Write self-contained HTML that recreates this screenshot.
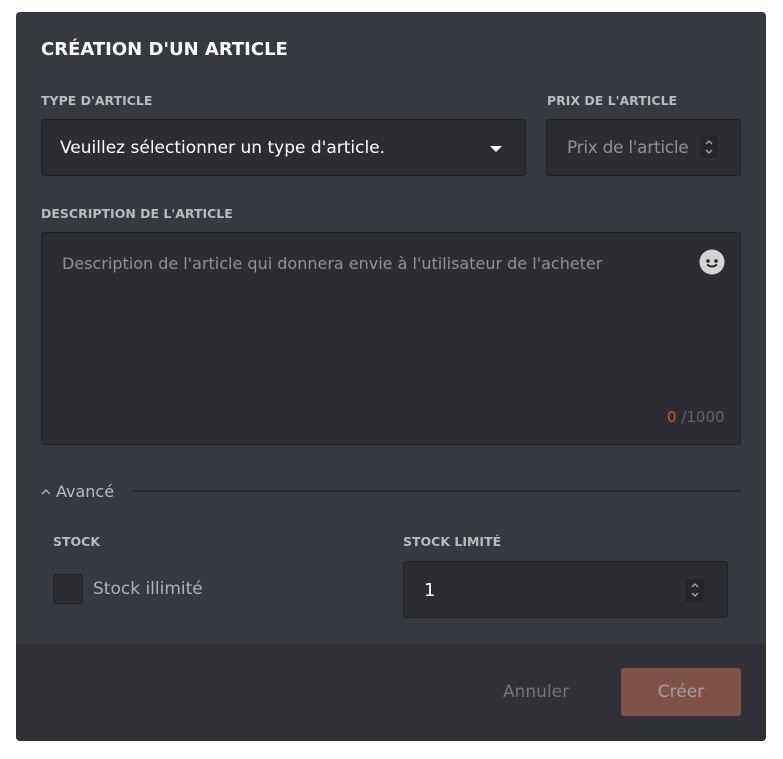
<!DOCTYPE html>
<html><head><meta charset="utf-8"><style>
*{margin:0;padding:0;box-sizing:border-box}
body{width:783px;height:759px;background:#fff;position:relative;font-family:"DejaVu Sans","Liberation Sans",sans-serif;overflow:hidden}
.m{position:absolute;left:16px;top:12px;width:750px;height:729px;background:#36393f;border-radius:4px;overflow:hidden}
.a{position:absolute;white-space:nowrap}
.lbl{position:absolute;color:#b9bbbe;font-size:12.5px;font-weight:bold;letter-spacing:0}
.in{position:absolute;background:#2b2d32;border:1px solid #212225;border-radius:3px}
.foot{position:absolute;left:0;top:632px;width:750px;height:97px;background:#2f3136}
</style></head><body>
<div class="m">
<div class="a" style="left:25px;top:27px;color:#fff;font-size:18px;font-weight:bold">CRÉATION D'UN ARTICLE</div>
<div class="lbl" style="left:25px;top:81px">TYPE D'ARTICLE</div>
<div class="lbl" style="left:531px;top:81px">PRIX DE L'ARTICLE</div>
<div class="in" style="left:25px;top:107px;width:485px;height:57px">
 <div class="a" style="left:18px;top:18px;color:#fff;font-size:17px">Veuillez sélectionner un type d'article.</div>
 <div class="a" style="left:448px;top:26px;width:0;height:0;border-left:6px solid transparent;border-right:6px solid transparent;border-top:6px solid #fff"></div>
</div>
<div class="in" style="left:530px;top:107px;width:195px;height:57px">
 <div class="a" style="left:20px;top:18px;color:#8e9297;font-size:17px;letter-spacing:-0.3px">Prix de l'article</div>
 <svg class="a" style="left:153px;top:16px" width="18" height="22"><rect width="18" height="22" fill="#25262b"/><path d="M6 8l3-3 3 3M6 14l3 3 3-3" stroke="#aaa" stroke-width="1.3" fill="none"/></svg>
</div>
<div class="lbl" style="left:25px;top:194px">DESCRIPTION DE L'ARTICLE</div>
<div class="in" style="left:25px;top:220px;width:700px;height:213px">
 <div class="a" style="left:20px;top:21px;color:#8e9297;font-size:16px">Description de l'article qui donnera envie à l'utilisateur de l'acheter</div>
 <svg class="a" style="left:657px;top:16px" width="26" height="26"><circle cx="13" cy="13" r="12.5" fill="#d4d4d4"/><circle cx="9" cy="12" r="1.7" fill="#222"/><circle cx="17" cy="12" r="1.7" fill="#222"/><path d="M8 15.5q5 4 10 0" stroke="#222" stroke-width="1.8" fill="none"/></svg>
 <div class="a" style="left:625px;top:175px;font-size:15px;color:#63656a"><span style="color:#e0553f">0</span> /1000</div>
</div>
<svg class="a" style="left:25px;top:476px" width="10" height="8"><path d="M1 6l4-4 4 4" stroke="#b9bbbe" stroke-width="1.3" fill="none"/></svg>
<div class="a" style="left:40px;top:470px;color:#b9bbbe;font-size:16px">Avancé</div>
<div class="a" style="left:116px;top:478px;width:609px;height:2px;background:#2a2c30"></div>
<div class="lbl" style="left:37px;top:522px">STOCK</div>
<div class="lbl" style="left:387px;top:522px">STOCK LIMITÉ</div>
<div class="a" style="left:37px;top:562px;width:30px;height:30px;background:#2b2d32;border:1px solid #212225;border-radius:4px"></div>
<div class="a" style="left:77px;top:567px;color:#b0b2b6;font-size:17px">Stock illimité</div>
<div class="in" style="left:387px;top:549px;width:325px;height:57px">
 <div class="a" style="left:20px;top:18px;color:#fff;font-size:18px">1</div>
 <svg class="a" style="left:282px;top:17px" width="18" height="22"><rect width="18" height="22" fill="#25262b"/><path d="M6 8l3-3 3 3M6 14l3 3 3-3" stroke="#aaa" stroke-width="1.3" fill="none"/></svg>
</div>
<div class="foot">
 <div class="a" style="left:487px;top:38px;color:#72767d;font-size:17px">Annuler</div>
 <div class="a" style="left:605px;top:24px;width:120px;height:48px;background:#7e5149;border-radius:3px;color:#a8a0a0;font-size:17px;text-align:center;line-height:48px">Créer</div>
</div>
</div>
</body></html>
